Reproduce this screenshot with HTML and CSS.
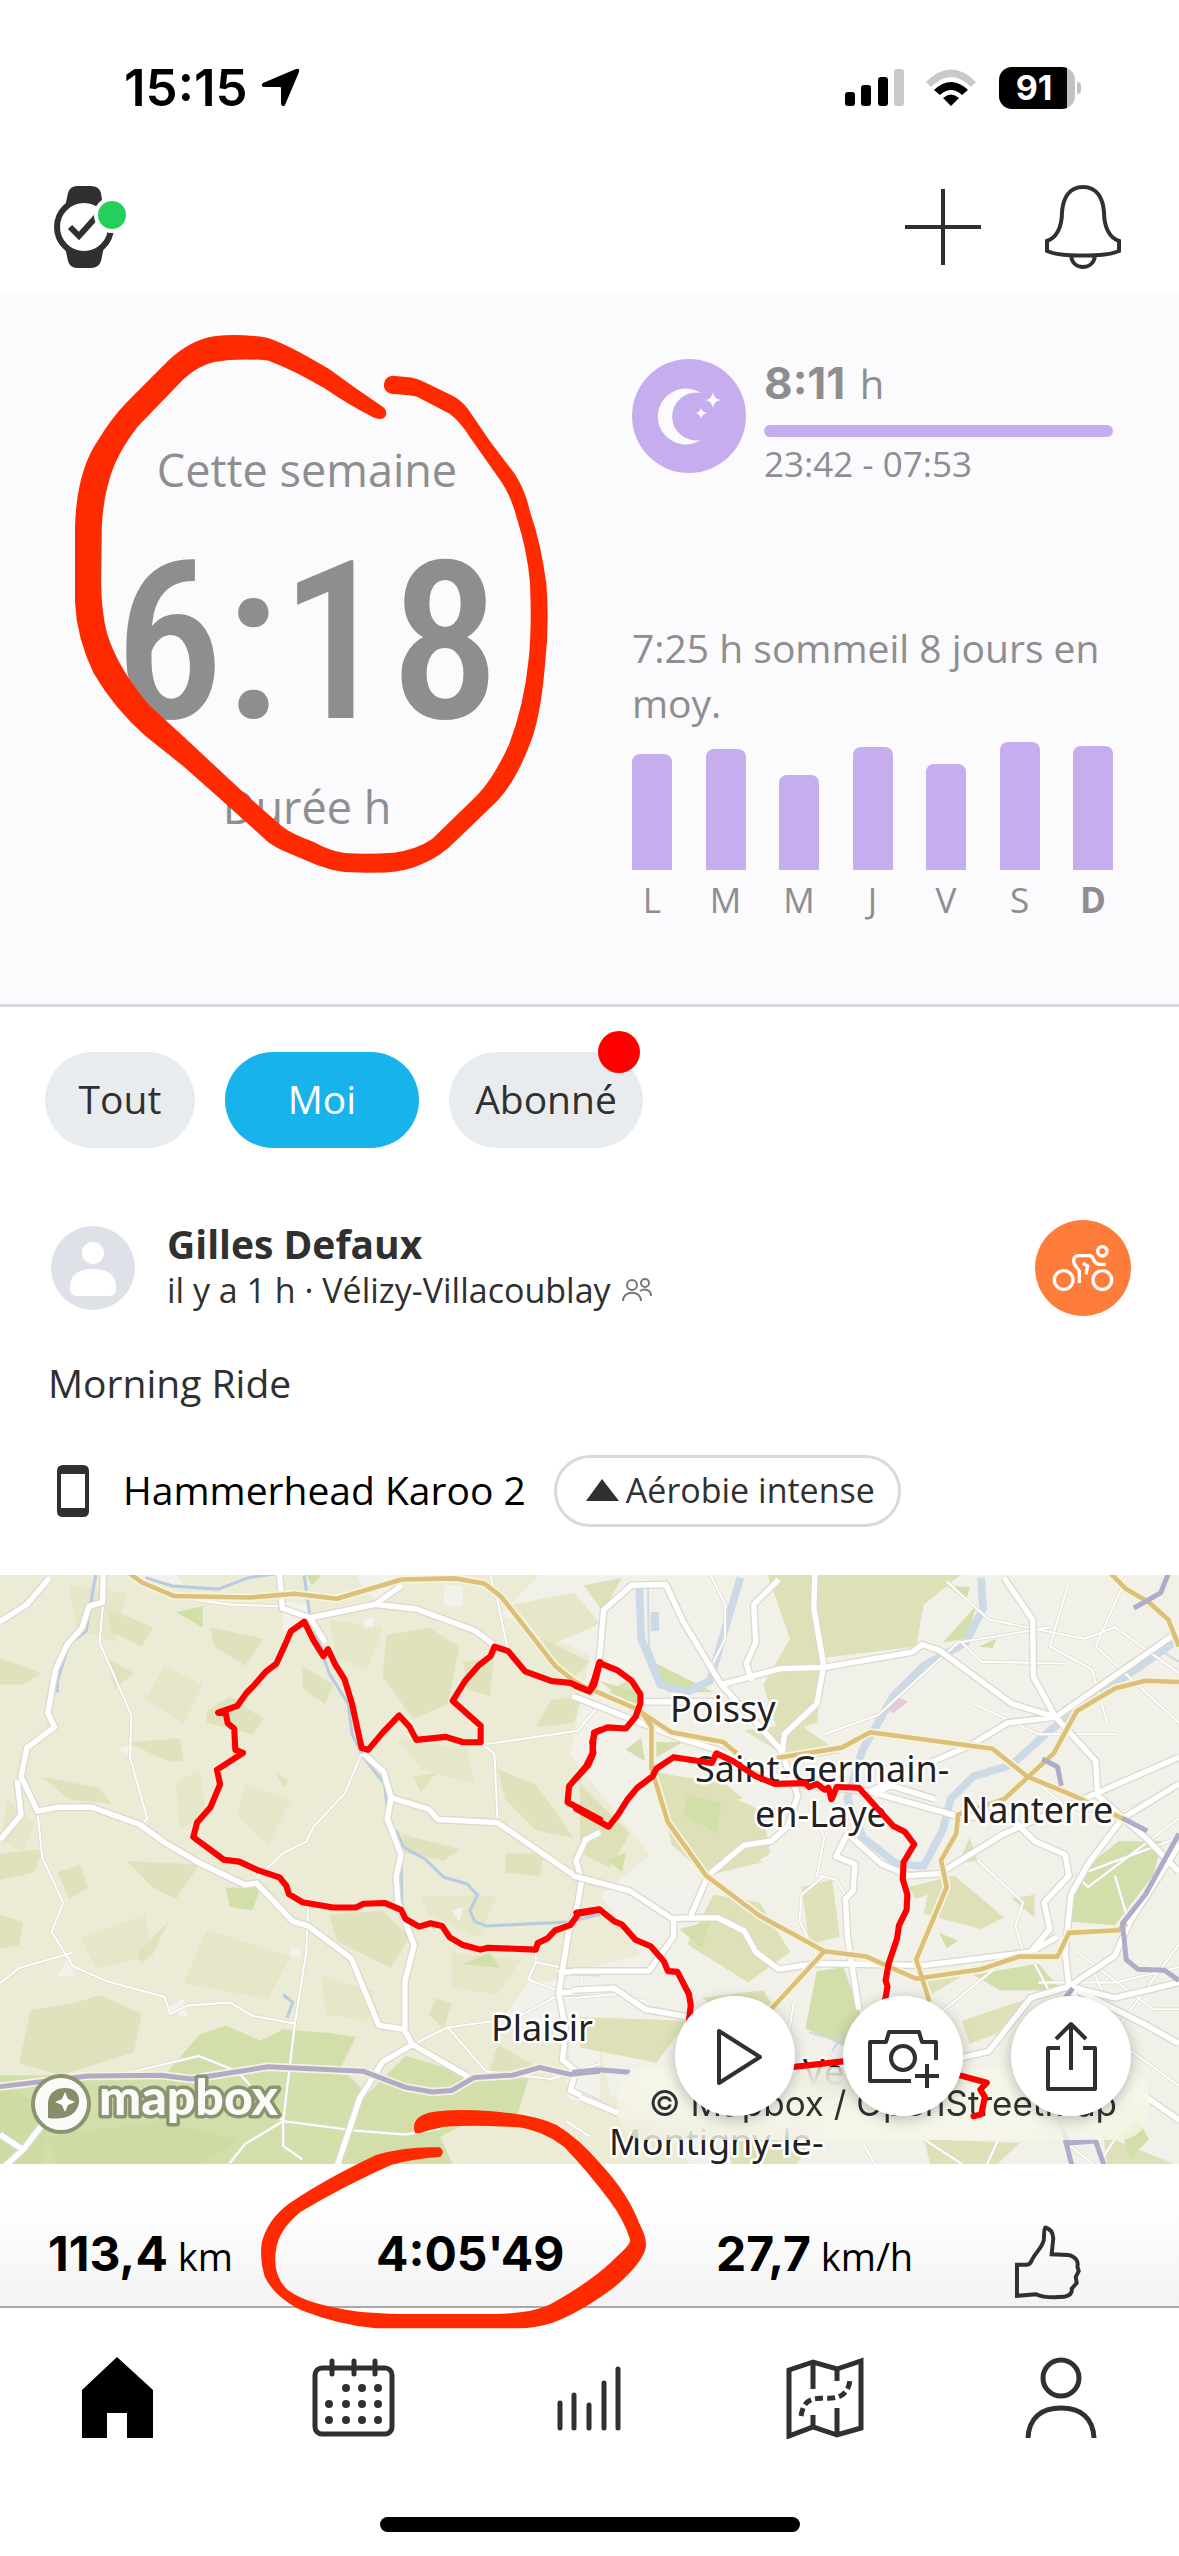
FILE: index.html
```html
<!DOCTYPE html>
<html lang="fr">
<head>
<meta charset="utf-8">
<meta name="viewport" content="width=device-width, initial-scale=1">
<title>Accueil</title>
<link rel="stylesheet" href="styles.css">
</head>
<body>
<div class="app">
  <div class="status">
    <div class="status-left">
      <span class="clock">15:15</span>
      <svg class="locate" viewBox="0 0 40 40" aria-hidden="true"><path d="M36 1Q40 0 39 4L25 37Q23 40 21 36V20Q21 19 20 19H4Q0 18 3 15Z"/></svg>
    </div>
    <div class="status-right">
      <svg class="signal" viewBox="0 0 60 38" aria-hidden="true"><rect y="23" width="10" height="14" rx="3"/><rect x="16" y="16" width="10" height="21" rx="3"/><rect x="33" y="8" width="10" height="29" rx="3"/><rect class="dim" x="49" width="10" height="37" rx="3"/></svg>
      <svg class="wifi" viewBox="0 0 52 38" aria-hidden="true"><path class="dim" d="M1 13Q26-12 51 13L46 18Q26-2 6 18Z"/><path d="M9 21Q26 5 43 21L37 26Q26 16 15 26Z"/><path d="M18 29Q26 22 34 29L26 37Z"/></svg>
      <div class="battery"><span class="battery-level">91</span></div>
    </div>
  </div>

  <header class="topbar">
    <button class="icon-button" aria-label="Montre">
      <svg class="watch" viewBox="54 185 76 84" aria-hidden="true">
        <path d="M65 207L68 193Q70 186 77 186H91Q99 186 101 193L103 207ZM65 247L68 261Q70 268 77 268H91Q99 268 101 261L104 247Z" fill="#303030"/>
        <circle cx="84" cy="227" r="27" fill="#fff" stroke="#303030" stroke-width="6"/>
        <path d="M70 227L79 236L97 216" fill="none" stroke="#303030" stroke-width="6"/>
        <circle cx="112" cy="215" r="18" fill="#fff"/><circle cx="112" cy="215" r="14" fill="#24cf5c"/>
      </svg>
    </button>
    <div class="topbar-actions">
      <button class="icon-button" aria-label="Ajouter"><svg class="plus line" viewBox="0 0 76 76" aria-hidden="true"><path d="M38 0V76M0 38H76"/></svg></button>
      <button class="icon-button" aria-label="Notifications"><svg class="bell line" viewBox="1044 184 78 86" aria-hidden="true"><path d="M1083 187C1068 187 1063 200 1062 212C1062 228 1056 238 1047 241V251C1060 257 1106 257 1119 251V241C1110 238 1104 228 1104 212C1103 200 1098 187 1083 187ZM1071 256C1072 263 1077 267 1083 267S1094 263 1095 256"/></svg></button>
    </div>
  </header>

  <main>
    <section class="widgets">
      <div class="week">
        <div class="week-label">Cette semaine</div>
        <div class="week-value">6:18</div>
        <div class="week-label">Durée h</div>
        <svg class="ink ink-week" viewBox="0 0 1568 1568" preserveAspectRatio="none" aria-hidden="true"><path d="M1025 217L1075 221Q1095 225 1110 233L1180 266Q1205 278 1222 300L1280 382L1345 465Q1372 505 1385 560Q1415 645 1428 745Q1436 850 1424 950Q1412 1090 1380 1160Q1345 1245 1300 1292L1195 1390Q1150 1435 1100 1453Q1060 1470 1010 1473L960 1474L900 1472Q865 1468 830 1455L740 1418Q705 1403 685 1382L600 1308L480 1205L380 1128Q300 1060 245 970Q200 880 196 790V600Q200 460 255 382Q290 325 330 285L440 178Q500 125 560 117Q620 110 695 120Q745 133 860 200Q930 250 1000 295Q1014 305 1007 320Q998 332 975 322Q910 290 850 250Q770 203 700 178Q620 172 560 182Q520 190 480 225L360 345Q320 395 300 440Q270 510 266 600L264 740Q266 820 280 870Q310 960 390 1050L480 1130L630 1265L735 1355Q760 1375 820 1396Q860 1418 900 1424Q960 1428 1030 1423Q1090 1415 1130 1388L1245 1280Q1290 1235 1330 1150Q1370 1050 1382 930Q1390 850 1385 740Q1378 660 1350 575Q1335 520 1310 485L1230 375Q1205 335 1175 313L1090 270Q1080 266 1025 263Q1003 258 1003 240Q1005 220 1025 217Z"/></svg>
      </div>
      <div class="sleep">
        <div class="sleep-row">
          <svg class="moon" viewBox="0 0 114 114" aria-hidden="true"><circle cx="57" cy="57" r="57" fill="#c6aeee"/><path d="M69 34A28 28 0 1 0 69 81A24 24 0 1 1 69 34Z" fill="#fbfafc"/><path d="M81 33Q82 40 89 41Q82 42 81 49Q80 42 73 41Q80 40 81 33ZM69 49Q70 53 75 54Q70 55 69 60Q68 55 64 54Q68 53 69 49Z" fill="#fbfafc"/></svg>
          <div class="sleep-info">
            <div class="sleep-total"><strong>8:11</strong> <span>h</span></div>
            <div class="sleep-bar"></div>
            <div class="sleep-range">23:42 - 07:53</div>
          </div>
        </div>
        <p class="sleep-average">7:25 h sommeil 8 jours en moy.</p>
        <div class="chart">
          <div class="bar" style="height:116px"></div><div class="bar" style="height:121px"></div><div class="bar" style="height:95px"></div><div class="bar" style="height:123px"></div><div class="bar" style="height:106px"></div><div class="bar" style="height:128px"></div><div class="bar" style="height:124px"></div>
        </div>
        <div class="days"><span>L</span><span>M</span><span>M</span><span>J</span><span>V</span><span>S</span><strong>D</strong></div>
      </div>
    </section>

    <nav class="filters" aria-label="Filtre">
      <button class="pill pill-small">Tout</button>
      <button class="pill pill-active">Moi</button>
      <button class="pill">Abonné<span class="badge"></span></button>
    </nav>

    <article>
      <div class="author">
        <svg class="avatar" viewBox="0 0 84 84" aria-hidden="true"><circle cx="42" cy="42" r="42" fill="#dee1e7"/><circle cx="42" cy="27" r="11" fill="#fff"/><path d="M19 62C19 48 28 43 42 43S65 48 65 62Q65 70 58 70H26Q19 70 19 62Z" fill="#fff"/></svg>
        <div class="author-text">
          <div class="author-name">Gilles Defaux</div>
          <div class="author-meta">il y a 1 h · Vélizy-Villacoublay
            <svg class="people" viewBox="0 0 30 24" aria-hidden="true"><circle cx="10" cy="7" r="5"/><circle cx="23" cy="5" r="4"/><path d="M1 23C1 12 19 12 19 23M18 13C23 10 29 12 29 18"/></svg>
          </div>
        </div>
        <svg class="sport" viewBox="15 15 288 288" aria-hidden="true"><circle cx="159" cy="159" r="144" fill="#ff7d3b"/><g fill="none" stroke="#fff" stroke-width="10"><circle cx="101" cy="195" r="28"/><circle cx="217" cy="195" r="28"/><circle cx="217" cy="109" r="14"/><path d="M148 204V168L133 147Q126 124 146 122H180Q188 124 191 135Q197 148 212 148H228M158 144L173 153L168 178"/></g></svg>
      </div>
      <p class="activity-title">Morning Ride</p>
      <div class="device">
        <svg class="device-icon" viewBox="0 0 32 52" aria-hidden="true"><path fill-rule="evenodd" d="M6 0H26Q32 0 32 6V46Q32 52 26 52H6Q0 52 0 46V6Q0 0 6 0ZM4 9V43H28V9Z"/></svg>
        <span class="device-name">Hammerhead Karoo 2</span>
        <span class="tag"><svg class="triangle" viewBox="0 0 33 22" aria-hidden="true"><path d="M16 0L33 22H0Z"/></svg>Aérobie intense</span>
      </div>

      <div class="map">
        <svg class="map-layer" viewBox="0 0 1179 589" preserveAspectRatio="xMidYMid slice" role="img" aria-label="Carte du parcours">
          <defs>
            <g id="roads-l">
              <path d="M0 135L70 90L130 20M270 10L268 85L232 95L215 150L175 195L145 260L125 375L143 410L70 465L55 540L98 630L150 620H240L365 665L430 712L520 765L640 823L670 818L765 918L805 930L918 1015L990 1190L1055 1200L1078 1240L1225 1325M45 550L55 640L0 705M730 10L738 100L810 125L980 90L1050 40M810 125L850 190M980 90L1088 102L1240 158L1290 195M950 480L1003 528L1022 595L1012 650L1048 745L1035 800L1040 870L1082 980L1058 1075V1200M1022 595L1120 625L1145 652L1300 660L1510 805L1568 820M1568 685L1530 705L1505 760L1520 810L1510 870L1485 950L1460 1105L1478 1200L1470 1280L1505 1310L1490 1360L1568 1395M1078 1240L1000 1285L940 1380L880 1560M0 1475L60 1515L110 1450M1460 1050H1568M1460 1105L1568 1100M60 1515L10 1560"/>
            </g>
            <g id="roads-r">
              <path d="M50 240L62 105L135 40L225 38L270 135L370 300L525 470L570 590L545 670L500 710L430 720L335 800L290 905M-20 800L130 840L240 912L360 910L430 945L460 1000L520 1045L620 1030L900 1035L1180 1000L1250 960M370 300L525 258L640 255L870 215L895 195L940 210L1130 350L1245 385M520 25L455 90L460 190L435 245L450 290M615 10L612 100L638 250L620 350L535 430L530 475M1245 385L1187 280L1185 130L1110 20M1245 385L1350 500L1355 590L1480 700L1568 790M1245 385L1568 160M1245 385L1120 400L1020 460L880 520L770 590M700 690L670 750L720 770L715 840L695 860L700 960L730 1150M700 690L790 770L860 800L940 795L1110 690L1568 490M-20 330L260 440L355 470L560 560L760 580L990 645L1130 650L1190 710L1270 745L1280 800L1215 870L1230 940L1180 1000M165 345L370 345M1568 560L1420 650L1330 770L1285 850L1270 1000L1280 1090L1480 1190L1568 1240M1280 1090L1180 1120L1070 1260L940 1290M-20 1100L90 1095L170 1150L285 1170M-20 1050H180L245 960V912M0 1380L120 1430M1568 720L1440 920L1400 1010L1280 1090M1568 1080L1400 1120L1280 1090L1440 1350L1568 1440M930 600L800 560L740 590"/>
            </g>
            <g id="minor-l">
              <path d="M270 80L260 190L300 280L343 380L340 490L385 650L370 665M98 630L110 750L165 870L135 945L190 1035L280 1075L430 1115L445 1160L490 1138L600 1130L660 1165L770 1185M190 1000L50 1040L0 1080M805 880L800 1000L770 1190L740 1440V1505L790 1540M945 480L900 585L820 670L800 710L740 740L670 805M1260 455L1292 480L1300 655M1270 455L1510 420L1568 350M1280 10L1300 80L1325 200M450 70L600 90L730 95M350 1310L520 1270L620 1310L740 1440L930 1465L1060 1475L1150 1460M600 1550L640 1500L740 1440M1078 1240L1170 1195L1280 1180L1350 1170L1460 1110M1170 1195L1270 1310L1440 1330L1568 1290M1400 1000V1025L1380 1070L1460 1100M1400 1025L1568 1060M1520 1050V1105M1480 1440L1540 1480"/>
            </g>
            <g id="minor-r">
              <path d="M340 10L380 90V180L340 260M640 430L780 380L990 190L1230 150M1000 190L1050 240L1270 245M960 30L1070 130L1220 160L1320 180L1400 150L1568 270M1280 30L1230 200L1340 260L1380 400M1430 20L1350 200L1568 400M1030 350L1200 430L1400 430M640 800L580 850L575 920L620 1010M620 800L670 810L700 860M620 800L640 700L600 620M1040 760L1160 870L1140 930L1160 1000M1200 560L1300 640L1410 640L1568 560M1568 650L1330 830L1300 800L1568 700M1400 800L1430 900M1190 1030L1280 1200L1400 1300M1300 1000L1500 1150L1568 1150M1568 980L1420 1180L1300 1350M1340 1040L1430 1250L1568 1350M1200 1080L1400 1080L1568 1040M930 1170L1090 1040M1400 1490L1350 1568M900 1490L1020 1568M1260 1490L1360 1568M1100 1480L1060 1568M740 1500L780 1568M560 1130L540 1250M-10 1120L100 1110L170 1130"/>
            </g>
          </defs>
          <rect width="1179" height="589" fill="#ecebd5"/>
          <path d="M540 0H1179V589H690L650 540L610 520L600 470L540 450L560 400L640 380L600 320L650 280L570 180L590 80L500 40Z" fill="#f2f1ec" opacity=".85"/>
          <g class="land" transform="translate(0 -5) scale(.3827)">
            <path class="meadow" d="M430 250L530 300L480 400L380 340ZM640 560L760 600L700 720L620 640ZM1100 850L1300 850L1250 960L1120 900ZM180 40L330 60L300 190L200 150ZM20 600L90 660L60 740L0 700ZM540 940L760 1010L700 1120L480 1080ZM840 1060L980 1100L960 1180L850 1160ZM1040 440L1220 470L1240 560L1100 520ZM860 130L1000 150L960 260L880 230ZM1180 1000L1360 1020L1300 1110L1180 1090ZM210 960L380 900L400 1010L250 1040ZM1340 90L1500 60L1568 140L1430 200ZM460 560L520 520L540 640L470 680Z"/>
            <path class="wood" d="M1010 170L1120 150L1200 200L1170 350L1080 390L1000 280ZM540 370L600 330L690 390L660 430L540 400ZM790 250L870 300L850 350L790 310ZM110 540L260 570L290 610L180 600ZM0 740L110 730L90 790L0 810ZM860 900L1000 890L1070 960L1020 1040L880 970ZM1050 690L1200 730L1160 760L1060 740ZM1320 740L1420 740L1410 800L1320 790ZM1300 520L1400 560L1500 700L1400 680L1320 600ZM180 860L230 830L210 770L150 790ZM330 450L470 440L480 500L440 500ZM1210 240L1290 230L1280 330L1220 310ZM80 1150L200 1130L260 1110L370 1160L350 1260L160 1320L50 1290ZM330 760L520 770L460 860L400 830ZM360 1000L440 920L400 1000L370 1030ZM0 900L60 920L50 980L0 990ZM550 150L690 180L640 250L560 200ZM280 100L400 150L370 200L290 160ZM1420 180L1540 240L1500 280L1430 240ZM280 230L350 270L300 310ZM0 230L110 270L60 300L0 300ZM1440 340L1520 330L1500 400L1400 410ZM1080 540L1140 530L1100 580ZM720 530L755 550L740 568ZM1140 1120L1180 1130L1160 1200L1120 1160ZM1300 1240L1390 1290L1380 1330L1280 1310Z"/>
            <path class="park" d="M0 1320H430L520 1215L590 1190L680 1230L740 1200L860 1210L930 1220L890 1300L960 1370L1060 1270L1230 1320L1380 1330L1350 1430L1230 1440L1150 1480L1190 1568H0ZM590 830L680 830L660 890L600 880ZM1210 1030L1280 1000L1305 1040ZM460 110L530 95V150ZM800 10L840 13L815 40Z"/>
            <path class="deep" d="M0 1350L130 1400L110 1568H0ZM210 1510L400 1568H200ZM120 1480L420 1440L620 1490L500 1568H160Z"/>
            <path class="town" d="M370 10H460L480 40L370 30ZM930 10H1040L1000 90L960 60ZM740 80L800 90L820 140L740 160ZM1160 40H1210V95H1160ZM310 470L340 455L350 490ZM1180 890L1210 880L1200 920ZM150 1060L180 1010L195 1060ZM430 1150L480 1120L490 1170ZM1380 1080L1568 1060V1200L1470 1200L1300 1190ZM1490 1230L1568 1220V1400L1480 1380ZM760 985H785V1010H760ZM950 125H975V150H950ZM600 870L660 890Z"/>
          </g>
          <g class="land" transform="translate(580 -5) scale(.382)">
            <path d="M490 10H1000L900 90L880 200L640 230L620 400L520 430L480 300L550 180ZM200 530L380 560L480 640L500 760L330 800L240 720ZM430 420L570 400L680 480L560 500ZM350 850L470 870L550 1000L440 1080L280 980ZM580 830L660 810L680 960L600 980ZM860 830L980 800L1110 910L1050 940L900 900ZM990 770L1020 700L1040 760ZM1000 1180L1180 1120L1130 1200L1020 1240ZM0 1170L280 1180L200 1290L0 1250ZM320 1120L480 1100L540 1200L480 1260ZM900 1060L1040 1040L920 1110ZM0 560L130 690L80 780L0 740ZM60 330L120 290L160 340ZM380 1480L600 1500L560 1568H400ZM900 1490L1150 1500L1080 1568H920ZM1370 1480L1568 1560H1380ZM1130 860L1190 850L1190 910ZM10 40L110 20L60 110Z"/>
            <path class="park" d="M620 1050L690 1040L740 1180L700 1250L590 1200ZM1310 790L1410 710L1525 710L1500 800L1400 930L1280 920ZM1030 1060L1200 1030L1260 1100L1100 1100ZM950 190L1040 90L1010 180ZM960 40L1020 45L1010 80ZM190 240L350 320L230 320ZM280 590L370 610L360 690L270 640ZM120 470L160 440L170 500ZM70 760L120 740L110 790ZM260 940L340 920L320 990ZM940 950L990 970L960 990ZM200 450L270 450L200 490ZM1045 200L1090 180L1080 205ZM1420 1480L1460 1440L1490 1490L1440 1540ZM50 290L150 320L150 365Z"/>
            <path class="town" d="M200 160L270 140L290 200L230 210ZM410 600L520 590L500 640ZM470 760L560 700L520 800ZM220 830L290 820L270 890L210 880ZM850 870L910 850L900 900Z"/>
          </g>
          <g class="water" transform="translate(0 -5) scale(.3827)">
            <path d="M250 13L235 100L225 160L180 195L150 290V320M795 15L810 120L860 270L910 350L920 430L950 490L1005 560L1015 650L1048 760L1050 870L1062 950L1080 985L1060 1050M1035 680L1055 725L1110 755L1160 803L1220 820L1248 850L1228 890L1240 918L1270 930L1485 920L1568 900M380 20L450 42L570 50L650 20L720 10M740 1110L765 1130L750 1170"/>
          </g>
          <g class="water wide" transform="translate(580 -5) scale(.382)">
            <path d="M155 40L160 180L210 300L280 320L340 290L390 120L420 20M1050 20L1055 100L1010 190L900 250L820 330L740 470L700 600L740 700L830 770L900 775L950 680L970 600L1030 540L1130 510L1230 420L1568 180"/>
            <path class="thin" d="M178 40L180 200L215 290M1500 200L1568 240M600 1210L700 1240M660 1260L690 1210"/>
            <path d="M185 110H207V160H185Z" fill="#ccd9e6" stroke="none"/><path d="M805 365L835 333L858 345L820 375Z" fill="#dfccd6" stroke="none"/>
          </g>
          <g class="roads" transform="translate(0 -5) scale(.3827)">
            <use href="#minor-l" class="minor-case"/><use href="#minor-l" class="minor"/>
            <use href="#roads-l" class="case"/><use href="#roads-l" class="major"/>
            <path class="halo" d="M340 10L370 32L455 68L650 72L770 62L880 75L1050 25L1190 22L1265 35L1310 70L1450 250L1500 290L1568 322"/>
            <path class="gold" d="M340 10L370 32L455 68L650 72L770 62L880 75L1050 25L1190 22L1265 35L1310 70L1450 250L1500 290L1568 322"/>
            <path class="halo" d="M0 1350L230 1322L420 1320L500 1330L700 1298L950 1310L1060 1352L1130 1364L1180 1360L1240 1326L1340 1320L1410 1300L1490 1318L1568 1310"/>
            <path class="violet" d="M0 1350L230 1322L420 1320L500 1330L700 1298L950 1310L1060 1352L1130 1364L1180 1360L1240 1326L1340 1320L1410 1300L1490 1318L1568 1310"/>
          </g>
          <g class="roads" transform="translate(580 -5) scale(.382)">
            <use href="#minor-r" class="minor-case"/><use href="#minor-r" class="minor"/>
            <use href="#roads-r" class="case"/><use href="#roads-r" class="major"/>
            <path class="halo" d="M0 300L140 360L240 425L375 450L410 480M160 370L187 410V520L230 660L330 800L470 905L640 998L750 1012L880 1070L1050 1045L1150 1012H1250L1280 950L1410 943L1430 925M640 998L500 1150M515 492L685 465L760 425L1080 468L1170 540L1290 590L1430 655M1390 10L1430 50L1490 85L1540 130L1568 200M1568 293L1480 290L1400 310L1300 370L1240 480L1110 600L990 640L985 690L945 760L960 830L880 1020L915 1130"/>
            <path class="gold" d="M0 300L140 360L240 425L375 450L410 480M160 370L187 410V520L230 660L330 800L470 905L640 998L750 1012L880 1070L1050 1045L1150 1012H1250L1280 950L1410 943L1430 925M640 998L500 1150M515 492L685 465L760 425L1080 468L1170 540L1290 590L1430 655M1390 10L1430 50L1490 85L1540 130L1568 200M1568 293L1480 290L1400 310L1300 370L1240 480L1110 600L990 640L985 690L945 760L960 830L880 1020L915 1130"/>
            <path class="violet" d="M1450 100L1520 60L1540 10M1210 495L1250 515L1260 565M1420 650L1485 683M1568 690L1480 850L1420 925L1430 1020L1460 1045L1530 1048L1568 1075M-20 1315L50 1308L130 1315M1270 1120L1290 1095M1245 1370L1250 1440L1280 1500L1350 1495L1375 1568M1270 1490L1290 1568"/>
          </g>
          <g class="places">
            <text x="670" y="147">Poissy</text><text x="695" y="207">Saint-Germain-</text><text x="755" y="252">en-Laye</text><text x="961" y="248">Nanterre</text><text x="491" y="466">Plaisir</text><text x="803" y="510">Versailles</text><text x="609" y="580">Montigny-le-</text>
          </g>
          <g class="mapbox">
            <circle cx="61" cy="529" r="28"/>
            <path class="leaf" d="M48 543V529C48 514 62 511 72 514C83 520 80 534 71 540C64 544 56 544 48 543Z"/>
            <path class="spark" d="M65 517L68 524L75 527L68 530L65 537L62 530L55 527L62 524Z"/>
            <text x="99" y="540">mapbox</text>
          </g>
        </svg>
        <a class="credit" href="#credits">© Mapbox / OpenStreetMap</a>
        <svg class="map-layer route" viewBox="0 0 1179 589" preserveAspectRatio="xMidYMid slice" aria-hidden="true">
          <path transform="translate(0 -5) scale(.3827)" d="M1568 240L1553 300L1540 317L1490 295L1440 290L1372 265L1328 212L1292 200L1282 225L1250 250L1215 290L1183 342L1256 407V450H1210L1165 436L1088 444L1070 410L1043 380L1000 425L962 470L945 465L935 420L920 350L900 285L875 245L857 207L845 225L820 185L795 135L760 160L745 195L722 245L695 265L665 300L645 320L620 355L570 373L590 375L595 400L612 415L615 470L635 478L567 522L575 560L550 620L515 660L505 698L585 757L625 762L675 785L730 803L748 825L755 847L790 868L870 882H930L950 872L1005 870L1048 888L1060 912L1095 932L1125 923L1155 930L1175 960L1210 980L1255 992L1275 987L1400 992L1405 975L1430 963L1450 942L1490 928L1512 898L1568 888M1568 418L1552 425L1548 480L1530 515L1487 565L1483 607L1568 652"/>
          <path transform="translate(580 -5) scale(.382)" d="M-10 304L25 318L38 285L50 243L97 262L135 290L158 325V350L145 385L120 415L72 412L40 425L32 450L35 480L22 510L-10 545M-10 625L75 672L100 640L125 600L150 570L190 540L200 520L245 490L345 505L357 480L400 500L460 540L510 560L590 558L600 568L620 560L640 575L650 570L660 598L672 568L730 570L820 670L850 685L875 718L847 765L845 810L857 850L855 890L835 930L830 965L808 1030L800 1075L805 1090L798 1130M-10 897L50 888L90 920L110 928L145 968L185 985L220 1025L230 1050L255 1052L285 1110L290 1140L285 1180M540 1303L700 1285M980 1319L1065 1342L1048 1360L1060 1380L1050 1425L1030 1430M652 575L658 600"/>
        </svg>
        <div class="map-actions">
          <button class="round" aria-label="Lire"><svg class="line" viewBox="675 1996 120 120" aria-hidden="true"><path d="M719 2031V2083L760 2057Z"/></svg></button>
          <button class="round" aria-label="Ajouter une photo"><svg class="line" viewBox="843 1996 120 120" aria-hidden="true"><circle cx="903" cy="2058" r="12"/><path d="M911 2081H870V2042H886L889 2032H919L922 2042H936V2060M915 2076H939M927 2064V2088"/></svg></button>
          <button class="round" aria-label="Partager"><svg class="line" viewBox="1011 1996 120 120" aria-hidden="true"><path d="M1071 2070V2024M1056 2039L1071 2024L1086 2039M1060 2048H1048V2089H1095V2048H1083"/></svg></button>
        </div>
      </div>

      <div class="stats">
        <div class="stat"><strong>113,4</strong> km</div>
        <div class="stat"><strong>4:05'49</strong></div>
        <div class="stat"><strong>27,7</strong> km/h</div>
        <button class="icon-button" aria-label="J’aime"><svg class="thumb" viewBox="98 72 206 232" aria-hidden="true"><path d="M107 195V289L165 284C185 294 215 295 250 292C268 288 275 280 273 267L288 250L285 232L294 214L290 200C294 185 285 170 262 165L212 163L217 115C216 95 205 85 193 82C188 85 190 105 188 120C183 145 160 160 150 185C146 193 142 195 135 195Z"/></svg></button>
        <svg class="ink ink-stats" viewBox="0 0 1179 260" aria-hidden="true"><path transform="scale(.752 .3333)" d="M552 160Q545 115 570 98Q600 85 650 93Q710 103 740 135Q770 175 800 255Q835 340 850 430Q862 480 858 510Q850 560 815 625Q770 700 735 728Q710 745 690 745H500Q450 735 400 690Q365 650 352 590Q345 540 348 490Q355 420 385 370Q430 300 500 225Q540 198 585 202Q592 215 586 230Q550 235 520 255Q460 315 400 395Q370 450 367 510Q362 580 380 625Q400 665 450 685Q480 700 530 702H660Q705 700 730 675Q790 600 820 530Q838 495 838 480Q830 420 810 360Q780 270 750 200Q720 150 690 142Q630 133 590 140Q570 150 558 160Z"/></svg>
      </div>
    </article>
  </main>

  <nav class="tabs" aria-label="Navigation">
    <a href="#home" aria-label="Accueil"><svg viewBox="82 2357 71 82" width="71" height="82" aria-hidden="true"><path d="M117 2357L153 2390V2438H127V2413H107V2438H82V2390Z"/></svg></a>
    <a href="#calendar" aria-label="Calendrier"><svg viewBox="311 2357 83 82" width="83" height="82" aria-hidden="true"><rect class="line" x="314" y="2368" width="77" height="66" rx="7"/><path class="line round-cap" d="M331 2361V2374M353 2361V2374M374 2361V2374"/><path class="dots" d="M345 2388h0M361 2388h0M377 2388h0M328 2404h0M345 2404h0M361 2404h0M377 2404h0M328 2420h0M345 2420h0M361 2420h0M377 2420h0"/></svg></a>
    <a href="#stats" aria-label="Statistiques"><svg viewBox="557 2357 65 82" width="65" height="82" aria-hidden="true"><path class="line round-cap" d="M560 2403V2428M574 2395V2428M589 2405V2428M604 2383V2428M618 2369V2428"/></svg></a>
    <a href="#map" aria-label="Carte"><svg viewBox="783 2357 81 82" width="81" height="82" aria-hidden="true"><path class="line" d="M787 2370L811 2362L835 2369L859 2361V2428L835 2435L811 2427L787 2436ZM811 2362V2389M811 2415V2428M835 2369V2381M835 2408V2435"/><path class="line" stroke-dasharray="8 4" d="M799 2416C802 2398 811 2399 822 2398C836 2399 846 2396 848 2380"/></svg></a>
    <a href="#profile" aria-label="Profil"><svg viewBox="1023 2357 74 82" width="74" height="82" aria-hidden="true"><ellipse class="line" cx="1060" cy="2378" rx="18" ry="18"/><path class="line" d="M1027 2438C1028 2418 1040 2408 1060 2408S1092 2418 1093 2438"/></svg></a>
  </nav>
  <div class="home-indicator"></div>
</div>
</body>
</html>
```

FILE: styles.css
```css
* { box-sizing: border-box; }
html, body { margin: 0; }
body {
  background: #fff;
  color: #303030;
  font-family: "Open Sans", "Noto Sans", sans-serif;
  font-size: 39px;
}
button { border: 0; padding: 0; font: inherit; color: inherit; background: none; }
a { color: inherit; text-decoration: none; }
svg { display: block; flex: none; }
p { margin: 0; }
.line { fill: none; stroke: #303030; stroke-width: 5; }
.round-cap { stroke-linecap: round; }
.app { display: flex; flex-direction: column; min-height: 100vh; }

.status { display: flex; justify-content: space-between; padding: 60px 104px 0 124px; height: 116px; color: #000; }
.status-left, .status-right { display: flex; align-items: center; }
.status-left { gap: 12px; }
.clock { font: 600 51px/56px Inter, sans-serif; }
.locate { width: 40px; height: 40px; }
.signal { width: 60px; height: 38px; }
.wifi { width: 52px; height: 38px; margin: 0 22px 0 20px; }
.dim { fill: #c9c9c9; }
.battery {
  position: relative;
  display: flex;
  align-items: center;
  justify-content: center;
  width: 76px;
  height: 42px;
  padding-right: 6px;
  border-radius: 13px;
  background: linear-gradient(90deg, #000 89%, #c2c2c2 89%);
}
.battery::after { content: ""; position: absolute; right: -6px; top: 15px; width: 4px; height: 12px; border-radius: 0 4px 4px 0; background: #c2c2c2; }
.battery-level { color: #fff; font: 700 34px/42px Inter, sans-serif; }

.topbar { display: flex; justify-content: space-between; align-items: center; padding: 68px 57px 23px 54px; }
.topbar-actions { display: flex; align-items: center; gap: 63px; }
.icon-button { display: block; }
.watch { width: 76px; height: 84px; }
.plus { width: 76px; height: 76px; }
.bell { width: 78px; height: 86px; }
.plus, .bell { stroke-width: 4; }

.widgets {
  display: grid;
  grid-template-columns: 614fr 565fr;
  background: #fbfafc;
  border-bottom: 3px solid #d8dadd;
  color: #8e8e90;
}
.week { position: relative; padding-top: 147px; text-align: center; }
.week-label { font-size: 45px; line-height: 60px; }
.week-value { margin: 43px 0 34px; font: 500 220px/200px "Roboto Condensed", "Liberation Sans Narrow", Roboto, sans-serif; }
.ink { position: absolute; left: 0; z-index: 5; fill: #ff2a00; pointer-events: none; }
.ink-week { top: -3px; width: 600px; height: 620px; }
.ink-stats { top: -84px; width: 1179px; height: 260px; }
.sleep { padding: 62px 66px 82px 18px; }
.sleep-row { display: flex; gap: 18px; }
.moon { width: 114px; height: 114px; margin-top: 4px; }
.sleep-info { flex: 1; }
.sleep-total { height: 56px; font-size: 40px; line-height: 56px; }
.sleep-total strong { margin-right: 4px; font-family: Inter, sans-serif; font-size: 44px; }
.sleep-bar { height: 12px; margin: 14px 0 5px; border-radius: 6px; background: #c6aeee; }
.sleep-range { font-size: 35px; line-height: 44px; }
.sleep-average { margin-top: 134px; font-size: 39px; line-height: 55px; }
.chart { display: flex; justify-content: space-between; align-items: flex-end; height: 140px; }
.bar { width: 40px; border-radius: 8px 8px 0 0; background: #c6aeee; }
.days { display: flex; justify-content: space-between; margin-top: 8px; font-size: 35px; line-height: 44px; }
.days > * { width: 40px; text-align: center; }

.filters { display: flex; gap: 30px; padding: 45px 45px 0; }
.pill { position: relative; width: 194px; height: 96px; padding-bottom: 4px; border-radius: 48px; background: #e8ecef; }
.pill-small { width: 150px; }
.pill-active { background: #18b3ea; color: #fff; }
.badge { position: absolute; top: -21px; right: 3px; width: 42px; height: 42px; border-radius: 50%; background: #f00; }

.author { display: flex; align-items: center; padding: 72px 48px 0 51px; }
.avatar { width: 84px; height: 84px; margin-right: 32px; }
.author-text { flex: 1; padding-bottom: 4px; }
.author-name { font-weight: 700; line-height: 48px; }
.author-meta { display: flex; align-items: center; gap: 11px; font-size: 34px; line-height: 44px; }
.people { width: 30px; height: 24px; fill: none; stroke: #777; stroke-width: 2; }
.sport { width: 96px; height: 96px; }
.activity-title { padding: 41px 48px 46px; line-height: 52px; }
.device { display: flex; align-items: center; padding: 0 57px 48px; }
.device-icon { width: 32px; height: 52px; margin-right: 34px; fill: #303030; }
.device-name { padding-bottom: 4px; color: #000; }
.tag {
  display: flex;
  align-items: center;
  gap: 7px;
  height: 72px;
  margin-left: 28px;
  padding: 0 23px 2px 29px;
  border: 3px solid #d8dadd;
  border-radius: 36px;
  font-size: 34px;
}
.triangle { width: 33px; height: 22px; fill: #303030; }

.map { position: relative; height: 589px; overflow: hidden; }
.map-layer { position: absolute; inset: 0; width: 100%; height: 100%; }
.land { fill: #dee1b8; }
.land .meadow { fill: #e6e7c8; }
.land .wood { opacity: .85; }
.land .park { fill: #d2dfaa; }
.land .deep { fill: #cbda9f; opacity: .7; }
.land .town { fill: #f2f1ec; }
.water { fill: none; stroke: #b5cce2; stroke-width: 8; }
.water.wide { stroke: #ccd9e6; stroke-width: 20; }
.water .thin { stroke-width: 5; }
.roads { fill: none; stroke-linejoin: round; }
.case { stroke: #dcd9d0; stroke-width: 21; }
.major { stroke: #fff; stroke-width: 14; }
.minor-case { stroke: #dfdcd2; stroke-width: 9; }
.minor { stroke: #fff; stroke-width: 5; }
.halo { stroke: #f6f3dc; stroke-width: 22; }
.gold { stroke: #dcc07a; stroke-width: 12; }
.violet { stroke: #b0abc9; stroke-width: 13; }
.places { font: 36px "Noto Sans", sans-serif; fill: #222; stroke: #fff; stroke-width: 5; paint-order: stroke; stroke-linejoin: round; }
.mapbox circle { fill: #fafaf6; stroke: #8b9472; stroke-width: 4; }
.leaf { fill: #858d6b; }
.spark { fill: #fff; }
.mapbox text { font: 900 50px Lato, sans-serif; fill: #fafaf6; stroke: #8b9472; stroke-width: 7; paint-order: stroke; stroke-linejoin: round; }
.credit {
  position: absolute;
  right: 30px;
  bottom: 24px;
  padding: 0 32px;
  border-radius: 30px;
  background: rgba(248, 249, 232, .6);
  backdrop-filter: blur(14px);
  font: 35px/73px Inter, sans-serif;
}
.route { fill: none; stroke: #f00; stroke-width: 16; stroke-linejoin: round; stroke-linecap: round; }
.map-actions { position: absolute; right: 48px; bottom: 48px; display: flex; gap: 48px; }
.round { width: 120px; height: 120px; border-radius: 50%; background: #fff; box-shadow: 0 3px 14px rgba(0, 0, 0, .25); }
.round .line { stroke-width: 4; stroke-linejoin: round; }

.stats {
  position: relative;
  display: grid;
  grid-template-columns: 328fr 340fr 298fr 165fr;
  padding: 60px 0 5px 48px;
  background: linear-gradient(#fff 25%, #f3f3f3);
  color: #000;
}
.stat { height: 60px; line-height: 60px; font-size: 38px; white-space: nowrap; }
.stat strong { font-family: Inter, sans-serif; font-size: 48px; }
.thumb { width: 68px; height: 77px; fill: none; stroke: #303030; stroke-width: 12; }

.tabs { display: grid; grid-template-columns: repeat(5, 1fr); border-top: 2px solid #a9a9a9; padding: 49px 0 78px; }
.tabs a { display: flex; justify-content: center; }
.dots { fill: none; stroke: #303030; stroke-width: 8; stroke-linecap: round; }
.home-indicator { width: 420px; height: 15px; margin: 0 auto 24px; border-radius: 8px; background: #000; }
```
